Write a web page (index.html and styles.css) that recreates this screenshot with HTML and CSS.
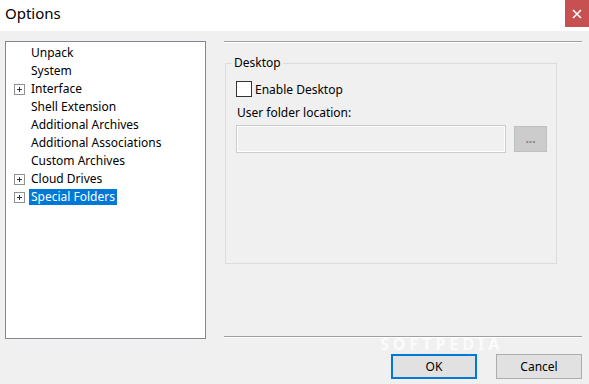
FILE: index.html
```html
<!DOCTYPE html>
<html lang="en">
<head>
    <meta charset="UTF-8">
    <title>Options</title>
    <link rel="stylesheet" href="styles.css">
</head>
<body>
    <div class="window">
        <div class="titlebar">
            <span class="title">Options</span>
            <button class="close-btn">
                <svg width="10" height="10" viewBox="0 0 10 10"><path d="M1 1 L9 9 M9 1 L1 9" stroke="#fff" stroke-width="1.6"/></svg>
            </button>
        </div>

        <div class="content">
            <ul class="tree">
                <li class="node">Unpack</li>
                <li class="node">System</li>
                <li class="node"><span class="expander"></span>Interface</li>
                <li class="node">Shell Extension</li>
                <li class="node">Additional Archives</li>
                <li class="node">Additional Associations</li>
                <li class="node">Custom Archives</li>
                <li class="node"><span class="expander"></span>Cloud Drives</li>
                <li class="node"><span class="expander"></span><span class="selected">Special Folders</span></li>
            </ul>

            <div class="pane">
                <div class="group">
                    <span class="group-title">Desktop</span>
                    <label class="check-row"><span class="checkbox"></span>Enable Desktop</label>
                    <div class="field-label">User folder location:</div>
                    <div class="path-row">
                        <div class="path-input"></div>
                        <button class="browse-btn">...</button>
                    </div>
                </div>
            </div>
        </div>

        <div class="footer">
            <span class="watermark">SOFTPEDIA</span>
            <button class="dlg-btn default">OK</button>
            <button class="dlg-btn">Cancel</button>
        </div>
    </div>
</body>
</html>
```

FILE: styles.css
```css
body {
    margin: 0;
    background-color: #f0f0f0;
    font-family: 'Segoe UI', 'Noto Sans', sans-serif;
    font-size: 12px;
    color: #000;
}
.window {
    width: 589px;
    height: 384px;
    display: flex;
    flex-direction: column;
    overflow: hidden;
}
.titlebar {
    height: 31px;
    background-color: #fff;
    display: flex;
    align-items: flex-start;
    justify-content: space-between;
}
.title {
    font-size: 15px;
    margin: 3px 0 0 5px;
    color: #000;
}
.close-btn {
    width: 24px;
    height: 27px;
    border: none;
    padding: 0;
    background-color: #c75050;
    display: flex;
    align-items: center;
    justify-content: center;
}
.content {
    display: flex;
    padding: 10px 7px 0 5px;
    height: 296px;
}
.tree {
    list-style: none;
    margin: 0;
    padding: 2px 0 0 0;
    width: 199px;
    height: 294px;
    background-color: #fff;
    border: 1px solid #828790;
}
.node {
    position: relative;
    height: 18px;
    line-height: 18px;
    padding-left: 25px;
}
.expander {
    position: absolute;
    left: 8px;
    top: 4px;
    width: 9px;
    height: 9px;
    border: 1px solid #919191;
    background-color: #fff;
}
.expander::before, .expander::after {
    content: '';
    position: absolute;
    background-color: #333;
}
.expander::before {
    left: 2px;
    top: 4px;
    width: 5px;
    height: 1px;
}
.expander::after {
    left: 4px;
    top: 2px;
    width: 1px;
    height: 5px;
}
.selected {
    display: inline-block;
    background-color: #0078d7;
    color: #fff;
    margin-left: -2px;
    padding: 0 2px;
    height: 16px;
    line-height: 16px;
}
.pane {
    flex: 1;
    margin-left: 18px;
    border-top: 1px solid #a0a0a0;
    border-bottom: 1px solid #a0a0a0;
    box-shadow: inset 0 1px 0 #fff, 0 1px 0 #fff;
}
.group {
    position: relative;
    margin: 21px 0 0 1px;
    padding: 17px 0 0 10px;
    border: 1px solid #dcdcdc;
    box-sizing: border-box;
    width: 332px;
    height: 201px;
}
.group-title {
    position: absolute;
    top: -9px;
    left: 6px;
    padding: 0 2px;
    line-height: 16px;
    background-color: #f0f0f0;
}
.check-row {
    display: flex;
    align-items: center;
    height: 16px;
}
.checkbox {
    width: 14px;
    height: 14px;
    border: 1px solid #333;
    background-color: #fff;
    margin-right: 3px;
}
.field-label {
    margin: 7px 0 0 1px;
    line-height: 18px;
}
.path-row {
    display: flex;
    align-items: center;
    margin-top: 3px;
}
.path-input {
    width: 270px;
    height: 28px;
    box-sizing: border-box;
    border: 1px solid #ccc;
    box-shadow: inset 0 0 0 1px #fff;
    background-color: #f0f0f0;
}
.browse-btn {
    margin-left: 8px;
    width: 33px;
    height: 26px;
    padding: 0;
    border: 1px solid #bfbfbf;
    background-color: #ccc;
    color: #838383;
    font-family: inherit;
    font-size: 12px;
    font-weight: bold;
    line-height: 20px;
}
.footer {
    position: relative;
    display: flex;
    justify-content: flex-end;
    gap: 19px;
    padding: 17px 7px 0 0;
}
.dlg-btn {
    width: 86px;
    height: 25px;
    background-color: #e1e1e1;
    border: 1px solid #adadad;
    font-family: inherit;
    font-size: 12px;
    color: #000;
    padding: 0;
}
.dlg-btn.default {
    border: 2px solid #0078d7;
}
.watermark {
    position: absolute;
    left: 380px;
    top: -1px;
    font-size: 16px;
    line-height: 16px;
    font-weight: bold;
    letter-spacing: 4px;
    color: rgba(255, 255, 255, 0.8);
    pointer-events: none;
}
```
